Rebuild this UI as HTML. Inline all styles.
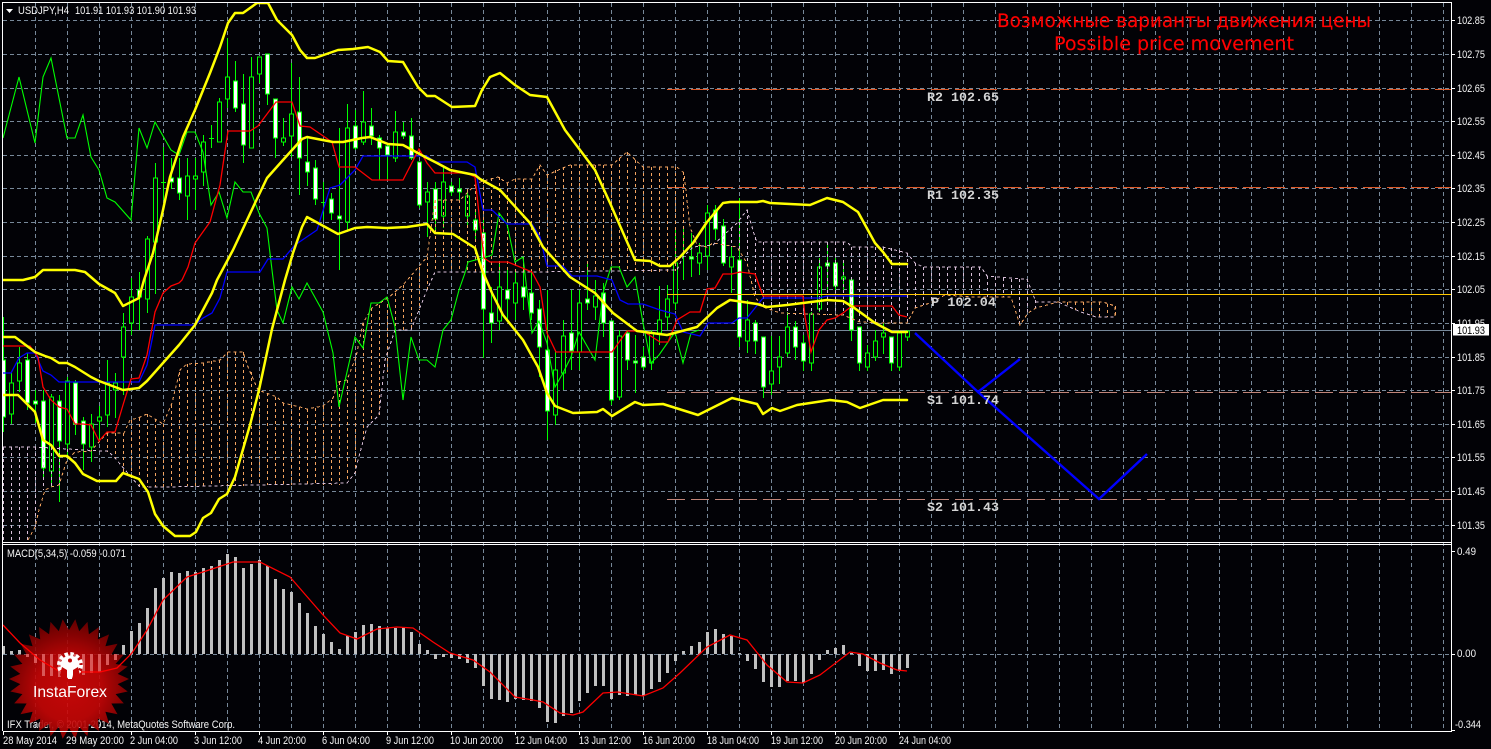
<!DOCTYPE html>
<html><head><meta charset="utf-8"><title>USDJPY,H4</title>
<style>
html,body{margin:0;padding:0;background:#020206;width:1491px;height:749px;overflow:hidden}
svg{display:block}
.t{font:11px "Liberation Sans",sans-serif;fill:#f6f6f6}
.p{font:bold 13px "Liberation Mono",monospace;fill:#d4d4d4}
.r{font:19px "DejaVu Sans",sans-serif;fill:#f00;stroke:#f00;stroke-width:.15px}
</style></head><body>
<svg xmlns="http://www.w3.org/2000/svg" width="1491" height="749" viewBox="0 0 1491 749">
<defs>
<clipPath id="c"><rect x="3" y="3" width="1448" height="539"/></clipPath>
<radialGradient id="g" cx=".5" cy=".58" r=".55"><stop offset="0" stop-color="#d80808"/><stop offset=".5" stop-color="#c80606"/><stop offset="1" stop-color="#760000"/></radialGradient>
</defs>
<rect width="1491" height="749" fill="#020206"/>
<!-- grid -->
<g fill="none" stroke="#778899" stroke-width="1" stroke-dasharray="4 3" shape-rendering="crispEdges">
<path d="M35.5 3V731M67.5 3V731M99.5 3V731M131.5 3V731M163.5 3V731M195.5 3V731M227.5 3V731M259.5 3V731M291.5 3V731M323.5 3V731M355.5 3V731M387.5 3V731M419.5 3V731M451.5 3V731M483.5 3V731M515.5 3V731M547.5 3V731M579.5 3V731M611.5 3V731M643.5 3V731M675.5 3V731M707.5 3V731M739.5 3V731M771.5 3V731M803.5 3V731M835.5 3V731M867.5 3V731M899.5 3V731M931.5 3V731M963.5 3V731M995.5 3V731M1027.5 3V731M1059.5 3V731M1091.5 3V731M1123.5 3V731M1155.5 3V731M1187.5 3V731M1219.5 3V731M1251.5 3V731M1283.5 3V731M1315.5 3V731M1347.5 3V731M1379.5 3V731M1411.5 3V731M1443.5 3V731"/>
<path d="M3 20.5H1451M3 54.5H1451M3 88.5H1451M3 121.5H1451M3 155.5H1451M3 188.5H1451M3 222.5H1451M3 256.5H1451M3 289.5H1451M3 323.5H1451M3 357.5H1451M3 390.5H1451M3 424.5H1451M3 457.5H1451M3 491.5H1451M3 525.5H1451M3 654.5H1451"/>
</g>
<!-- price and pivot lines -->
<g shape-rendering="crispEdges" fill="none">
<path d="M3 330.5H1451" stroke="#778899"/>
<path d="M667 89.5H1451M667 187.5H1451" stroke="#e05a28" stroke-dasharray="18 6"/>
<path d="M667 392.5H1451M667 499.5H1451" stroke="#c08478" stroke-dasharray="18 6"/>
</g>
<g clip-path="url(#c)">
<!-- wicks -->
<path shape-rendering="crispEdges" fill="none" stroke="#0f0" d="M3.5 317V432M11.5 373V424M19.5 347V392M27.5 353V410M35.5 390V423M43.5 390V480M51.5 394V487M59.5 395V502M67.5 377V457M75.5 380V435M83.5 417V470M91.5 414V462M99.5 406V440M107.5 360V427M115.5 373V418M123.5 313V395M131.5 278V335M139.5 272V330M147.5 236V313M155.5 163V294M163.5 147V200M171.5 158V189M179.5 158V200M187.5 158V220M195.5 158V210M203.5 135V186M211.5 125V148M219.5 98V142M227.5 38V108M235.5 61V112M243.5 74V163M251.5 57V148M259.5 57V83M267.5 54V105M275.5 99V158M283.5 118V146M291.5 63V157M299.5 77V195M307.5 138V186M315.5 160V205M323.5 182V220M331.5 193V220M339.5 128V270M347.5 104V232M355.5 110V150M363.5 91V145M371.5 108V145M379.5 135V180M387.5 146V180M395.5 111V162M403.5 122V139M411.5 118V160M419.5 162V208M427.5 182V237M435.5 182V230M443.5 167V228M451.5 182V196M459.5 178V200M467.5 190V228M475.5 210V240M483.5 220V358M491.5 287V343M499.5 263V330M507.5 270V320M515.5 272V320M523.5 257V310M531.5 272V320M539.5 300V377M547.5 290V440M555.5 350V425M563.5 320V390M571.5 290V370M579.5 290V370M587.5 262V310M595.5 280V320M603.5 283V337M611.5 321V405M619.5 330V400M627.5 330V370M635.5 335V393M643.5 347V370M651.5 330V370M659.5 286V345M667.5 285V330M675.5 230V310M683.5 227V280M691.5 233V277M699.5 243V275M707.5 205V270M715.5 205V240M723.5 219V266M731.5 247V293M739.5 198V347M747.5 300V353M755.5 320V354M763.5 337V398M771.5 336V395M779.5 336V384M787.5 312V357M795.5 321V360M803.5 335V371M811.5 312V371M819.5 258V312M827.5 243V290M835.5 258V290M843.5 263V290M851.5 280V341M859.5 327V371M867.5 345V371M875.5 330V361M883.5 323V354M891.5 337V371M899.5 330V371M907.5 330V341M161 182.5h5M209 138.5h5M321 202.5h5"/>
<!-- hollow bodies -->
<path shape-rendering="crispEdges" fill="#020206" stroke="#0f0" d="M9.5 383h4V414h-4zM17.5 363h4V381h-4zM49.5 397h4V471h-4zM65.5 381h4V444h-4zM89.5 424h4V447h-4zM97.5 417h4V421h-4zM105.5 383h4V415h-4zM113.5 383h4V390h-4zM121.5 327h4V357h-4zM129.5 297h4V323h-4zM145.5 239h4V299h-4zM153.5 178h4V242h-4zM185.5 176h4V196h-4zM193.5 176h4V179h-4zM201.5 142h4V172h-4zM217.5 102h4V142h-4zM225.5 77h4V99h-4zM249.5 77h4V148h-4zM257.5 57h4V74h-4zM281.5 138h4V142h-4zM289.5 114h4V136h-4zM345.5 128h4V222h-4zM361.5 122h4V142h-4zM393.5 132h4V158h-4zM425.5 192h4V202h-4zM441.5 182h4V216h-4zM465.5 196h4V216h-4zM497.5 287h4V321h-4zM513.5 283h4V303h-4zM553.5 370h4V415h-4zM561.5 336h4V373h-4zM577.5 303h4V352h-4zM593.5 296h4V307h-4zM617.5 336h4V397h-4zM649.5 333h4V363h-4zM657.5 320h4V333h-4zM665.5 299h4V317h-4zM673.5 263h4V303h-4zM697.5 253h4V263h-4zM705.5 213h4V256h-4zM729.5 257h4V267h-4zM745.5 320h4V341h-4zM769.5 371h4V384h-4zM777.5 357h4V367h-4zM785.5 327h4V353h-4zM809.5 314h4V363h-4zM817.5 267h4V309h-4zM841.5 277h4V279h-4zM865.5 353h4V367h-4zM873.5 341h4V357h-4zM881.5 333h4V337h-4zM897.5 333h4V367h-4zM905.5 331h4V337h-4z"/>
<!-- white bodies -->
<path shape-rendering="crispEdges" fill="#fff" stroke="#0f0" d="M1.5 360h4V417h-4zM25.5 360h4V403h-4zM33.5 401h4V404h-4zM41.5 401h4V468h-4zM57.5 401h4V441h-4zM73.5 383h4V424h-4zM81.5 421h4V444h-4zM137.5 290h4V297h-4zM169.5 178h4V182h-4zM177.5 178h4V193h-4zM233.5 81h4V108h-4zM241.5 104h4V145h-4zM265.5 54h4V94h-4zM273.5 99h4V138h-4zM297.5 112h4V158h-4zM305.5 162h4V172h-4zM313.5 168h4V199h-4zM329.5 199h4V213h-4zM337.5 216h4V219h-4zM353.5 126h4V148h-4zM369.5 126h4V136h-4zM377.5 138h4V148h-4zM385.5 146h4V155h-4zM401.5 132h4V136h-4zM409.5 136h4V158h-4zM417.5 162h4V205h-4zM433.5 189h4V219h-4zM449.5 186h4V192h-4zM457.5 189h4V192h-4zM473.5 220h4V230h-4zM481.5 233h4V309h-4zM489.5 313h4V323h-4zM505.5 290h4V299h-4zM521.5 287h4V297h-4zM529.5 293h4V313h-4zM537.5 309h4V347h-4zM545.5 350h4V411h-4zM569.5 333h4V351h-4zM585.5 299h4V303h-4zM601.5 293h4V323h-4zM609.5 321h4V400h-4zM625.5 333h4V360h-4zM633.5 361h4V363h-4zM641.5 357h4V367h-4zM689.5 257h4V259h-4zM713.5 210h4V229h-4zM721.5 226h4V263h-4zM737.5 260h4V337h-4zM753.5 323h4V341h-4zM761.5 337h4V387h-4zM793.5 327h4V347h-4zM801.5 343h4V361h-4zM825.5 263h4V266h-4zM833.5 263h4V286h-4zM849.5 280h4V330h-4zM857.5 327h4V363h-4zM889.5 337h4V363h-4z"/>
<!-- cloud -->
<g fill="none" stroke-dasharray="3 3" shape-rendering="crispEdges">
<path stroke="#f4a460" d="M107.5 433V452M115.5 433V458M123.5 433V473M131.5 420V477M139.5 418V487M147.5 414V487M155.5 419V487M163.5 424V487M171.5 405V486M179.5 372V486M187.5 364V486M195.5 363V486M203.5 363V486M211.5 361V486M219.5 360V486M227.5 352V486M235.5 352V486M243.5 352V486M251.5 372V486M259.5 390V486M267.5 393V485M275.5 397V485M283.5 403V485M291.5 405V485M299.5 407V485M307.5 409V485M315.5 408V485M323.5 406V485M331.5 400V485M339.5 382V485M347.5 380V483M355.5 357V473M363.5 323V441M371.5 308V423M379.5 305V415M387.5 298V372M395.5 293V330M403.5 285V330M411.5 277V330M419.5 267V310M427.5 257V290M435.5 200V272M443.5 200V272M451.5 200V272M459.5 200V272M467.5 189V272M475.5 185V272M483.5 181V272M491.5 178V272M499.5 177V272M507.5 183V272M515.5 179V272M523.5 179V272M531.5 179V272M539.5 166V272M547.5 175V272M555.5 170V272M563.5 167V272M571.5 165V272M579.5 165V272M587.5 165V272M595.5 165V272M603.5 165V272M611.5 165V272M619.5 158V272M627.5 152V272M635.5 160V272M643.5 167V272M651.5 167V272M659.5 167V272M667.5 167V272M675.5 167V271M683.5 172V257M1067.5 302V307M1075.5 302V310M1083.5 302V312M1091.5 302V315M1099.5 302V317M1107.5 304V317M1115.5 306V317"/>
<path stroke="#d8bfd8" d="M3.5 447V540M11.5 447V540M19.5 447V540M27.5 447V540M35.5 447V527M43.5 447V490M51.5 447V487M59.5 447V485M67.5 449V460M723.5 233V246M731.5 228V247M739.5 222V250M747.5 210V263M755.5 237V297M763.5 242V307M771.5 242V310M779.5 242V313M787.5 242V315M795.5 242V315M803.5 242V315M811.5 242V315M819.5 242V315M827.5 242V315M835.5 242V315M843.5 242V315M851.5 247V319M859.5 247V322M867.5 247V323M875.5 247V323M883.5 247V323M891.5 248V323M899.5 250V323M907.5 253V323M915.5 263V308M923.5 267V305M931.5 267V303M939.5 267V297M947.5 267V295M955.5 267V296M963.5 267V297M971.5 267V297M979.5 267V297M987.5 276V297M995.5 277V297M1003.5 278V297M1011.5 279V297M1019.5 279V325M1027.5 279V313M1035.5 300V308"/>
<polyline stroke="#f4a460" points="28,540 35,527 39,510 45,490 51,487 59,485 67,460 75,452 91,451 107,433 124,433 130,420 138,418 147,414 163,424 172,403 180,370 187,364 203,363 220,360 228,352 243,352 248,367 258,390 277,397 283,403 300,407 307,409 323,406 333,398 338,382 347,380 356,357 363,323 372,308 388,298 403,285 410,277 427,257 435,200 460,200 475,185 480,182 498,177 507,183 515,179 532,179 540,165 547,175 570,165 612,165 627,152 643,167 677,167 684,173 690,227 697,245 707,247 713,243 737,247 747,263 755,297 763,307 780,313 843,315 860,322 883,323 907,323 915,308 930,303 945,295 972,297 1011,297 1020,325 1028,313 1036,308 1058,302 1103,302 1115,306 1115,317"/>
<polyline stroke="#d8bfd8" points="3,447 35,447 100,451 108,451 115,458 131,477 140,487 165,487 347,483 355,473 358,460 367,427 379,415 385,360 395,330 411,330 427,290 435,272 533,272 677,270 683,257 693,247 713,245 737,223 747,210 755,237 757,242 847,242 852,247 883,247 907,253 915,263 923,267 981,267 987,276 1021,279 1027,279 1032,292 1036,302 1058,302 1081,312 1096,317 1115,317"/>
</g>
<!-- chikou -->
<polyline fill="none" stroke="#0f0" stroke-width="1.1" points="3,138 19,77 35,143 43,77 51,58 67,138 75,138 83,115 91,157 99,170 107,198 115,202 131,220 139,128 147,148 155,122 171,150 179,155 187,132 195,132 203,152 211,205 219,192 227,218 235,182 243,192 251,192 259,213 267,228 272,270 277,310 283,323 292,287 299,299 307,283 323,312 333,353 339,407 355,337 363,348 371,303 379,303 387,297 395,327 403,400 411,337 419,360 427,360 435,367 443,330 451,320 459,290 466,270 468,262 483,258 492,255 499,213 507,224 515,262 523,257 532,333 539,321 547,343 555,387 563,373 571,357 579,332 595,360 603,293 611,267 619,267 627,287 635,277 643,323 651,363 659,355 675,332 683,363 691,333 699,330"/>
<!-- kijun -->
<polyline fill="none" stroke="#0000ff" stroke-width="1.3" points="3,373 11,373 19,358 27,353 35,353 43,371 51,375 59,382 139,382 147,365 155,325 195,325 203,318 212,313 220,298 227,272 260,272 268,259 283,259 295,245 317,230 330,188 340,185 355,170 363,156 427,156 435,162 467,162 475,167 483,210 492,210 507,224 532,224 540,237 547,266 563,266 572,276 597,276 612,280 620,300 628,304 643,304 660,310 675,314 683,332 700,336 708,323 732,323 739,318 747,318 763,298 819,298 827,296 907,296"/>
<!-- tenkan -->
<polyline fill="none" stroke="#f00" stroke-width="1.3" points="3,346 30,346 38,357 43,387 51,400 59,407 67,409 75,424 83,424 91,425 99,441 107,432 115,432 123,405 131,379 139,378 147,355 155,312 163,293 171,286 179,283 182,280 188,267 195,243 210,222 220,185 228,131 250,131 258,126 276,102 292,102 300,126 310,127 332,142 339,167 355,167 372,180 403,180 419,149 427,163 435,173 467,173 475,177 480,223 484,258 490,262 508,262 532,272 540,287 547,333 556,352 612,352 627,331 643,331 660,342 668,342 677,320 690,312 700,312 707,289 715,288 723,274 732,274 740,272 755,274 763,296 803,296 805,317 811,352 819,330 827,320 835,318 843,313 852,306 892,306 899,315 907,317"/>
<!-- bollinger -->
<g fill="none" stroke="#ff0" stroke-width="2.5" stroke-linejoin="round" stroke-linecap="round">
<polyline points="3,280 23,280 35,277 43,270 75,270 85,272 99,284 115,293 123,306 139,298 144,280 153,253 163,210 170,177 183,137 195,110 210,73 220,47 228,23 235,13 243,13 257,3 268,3 277,20 292,35 300,50 307,58 315,58 338,50 353,49 368,47 380,52 388,61 403,62 418,87 427,96 435,96 452,107 475,106 482,90 490,77 500,73 515,85 530,95 547,97 565,130 595,170 610,203 635,260 650,261 660,266 670,266 680,257 693,243 707,222 723,203 730,202 757,202 763,201 770,203 810,205 827,198 843,202 858,212 875,243 883,252 892,264 907,264"/>
<polyline points="3,337 15,337 35,352 45,356 51,358 59,363 67,363 75,367 91,377 99,381 123,390 139,388 147,381 163,363 179,345 195,325 212,293 217,280 233,250 255,203 267,178 283,160 302,139 307,137 333,142 343,142 362,138 370,137 388,144 403,145 427,158 437,163 450,170 475,175 480,179 500,190 530,223 543,247 570,277 595,293 613,313 637,331 667,335 697,327 717,308 730,300 757,304 767,307 787,305 827,300 843,301 853,307 875,323 892,332 907,332"/>
<polyline points="3,395 18,395 35,412 43,440 51,445 59,456 67,456 75,463 83,474 97,481 116,481 123,473 139,479 148,492 155,514 163,526 175,536 190,536 196,532 203,518 211,513 219,499 227,494 235,477 250,425 259,390 272,329 285,280 293,253 302,227 307,217 338,234 355,228 367,227 387,228 407,227 427,224 435,233 453,234 475,248 482,270 492,293 503,315 523,340 538,367 547,393 555,406 573,413 597,412 603,409 612,416 635,402 643,405 663,404 698,415 732,398 757,404 763,414 772,408 780,411 797,405 830,400 847,402 860,408 883,400 907,400"/>
</g>
<!-- forecast -->
<g fill="none" stroke="#0000ff" stroke-width="2.4">
<polyline points="915,333 978,392 1020,359"/>
<polyline points="978,392 1099,499 1147,454"/>
</g>
<path d="M667 294.5H1451" stroke="#ffc800" shape-rendering="crispEdges"/>
<!-- pivot labels -->
<text class="p" x="927" y="101" textLength="72" lengthAdjust="spacingAndGlyphs">R2 102.65</text>
<text class="p" x="927" y="199" textLength="72" lengthAdjust="spacingAndGlyphs">R1 102.35</text>
<text class="p" x="931" y="306" textLength="65" lengthAdjust="spacingAndGlyphs">P 102.04</text>
<text class="p" x="927" y="404" textLength="72" lengthAdjust="spacingAndGlyphs">S1 101.74</text>
<text class="p" x="927" y="511" textLength="72" lengthAdjust="spacingAndGlyphs">S2 101.43</text>
<text class="r" x="997" y="27" textLength="374" lengthAdjust="spacingAndGlyphs">Возможные варианты движения цены</text>
<text class="r" x="1054" y="50" textLength="240" lengthAdjust="spacingAndGlyphs">Possible price movement</text>
</g>
<!-- top labels -->
<path d="M6 9h7l-3.5 4z" fill="#fff"/>
<text class="t" x="18" y="14" textLength="51" lengthAdjust="spacingAndGlyphs">USDJPY,H4</text>
<text class="t" x="75" y="14" textLength="121" lengthAdjust="spacingAndGlyphs">101.91 101.93 101.90 101.93</text>
<!-- MACD -->
<path fill="none" stroke="#c0c0c0" stroke-width="3" shape-rendering="crispEdges" d="M3.5 654V646M11.5 654V651M19.5 654V650M27.5 654V657M35.5 654V663M43.5 654V676M51.5 654V676M59.5 654V677M67.5 654V678M75.5 654V678M83.5 654V675M91.5 654V673M99.5 654V672M107.5 654V665M115.5 654V660M123.5 654V645M131.5 654V631M139.5 654V623M147.5 654V608M155.5 654V588M163.5 654V578M171.5 654V572M179.5 654V573M187.5 654V571M195.5 654V572M203.5 654V568M211.5 654V566M219.5 654V560M227.5 654V554M235.5 654V557M243.5 654V568M251.5 654V564M259.5 654V560M267.5 654V566M275.5 654V579M283.5 654V589M291.5 654V592M299.5 654V603M307.5 654V613M315.5 654V626M323.5 654V634M331.5 654V642M339.5 654V649M347.5 654V636M355.5 654V632M363.5 654V625M371.5 654V624M379.5 654V626M387.5 654V628M395.5 654V628M403.5 654V628M411.5 654V632M419.5 654V644M427.5 654V650M435.5 654V659M443.5 654V657M451.5 654V658M459.5 654V659M467.5 654V663M475.5 654V668M483.5 654V686M491.5 654V699M499.5 654V700M507.5 654V702M515.5 654V699M523.5 654V700M531.5 654V701M539.5 654V708M547.5 654V722M555.5 654V723M563.5 654V716M571.5 654V713M579.5 654V701M587.5 654V693M595.5 654V686M603.5 654V686M611.5 654V699M619.5 654V695M627.5 654V696M635.5 654V695M643.5 654V696M651.5 654V689M659.5 654V682M667.5 654V673M675.5 654V661M683.5 654V651M691.5 654V646M699.5 654V642M707.5 654V632M715.5 654V629M723.5 654V634M731.5 654V636M739.5 654V653M747.5 654V661M755.5 654V669M763.5 654V682M771.5 654V687M779.5 654V687M787.5 654V681M795.5 654V681M803.5 654V683M811.5 654V674M819.5 654V660M827.5 654V650M835.5 654V648M843.5 654V645M851.5 654V653M859.5 654V666M867.5 654V671M875.5 654V671M883.5 654V670M891.5 654V674M899.5 654V671M907.5 654V668"/>
<text class="t" x="7" y="557" textLength="119" lengthAdjust="spacingAndGlyphs">MACD(5,34,5) -0.059 -0.071</text>
<text class="t" x="7" y="728" textLength="228" lengthAdjust="spacingAndGlyphs">IFX Trader, © 2001-2014, MetaQuotes Software Corp.</text>
<!-- logo -->
<polygon transform="translate(69 679)" fill="url(#g)" opacity=".9" points="60,0 48.7,5.1 58.7,12.5 46.6,15.1 54.8,24.4 42.4,24.5 48.5,35.3 36.4,32.8 40.1,44.6 28.8,39.6 30,52 19.9,44.8 18.5,57.1 10.2,47.9 6.3,59.7 0,49 -6.3,59.7 -10.2,47.9 -18.5,57.1 -19.9,44.8 -30,52 -28.8,39.6 -40.1,44.6 -36.4,32.8 -48.5,35.3 -42.4,24.5 -54.8,24.4 -46.6,15.1 -58.7,12.5 -48.7,5.1 -60,0 -48.7,-5.1 -58.7,-12.5 -46.6,-15.1 -54.8,-24.4 -42.4,-24.5 -48.5,-35.3 -36.4,-32.8 -40.1,-44.6 -28.8,-39.6 -30,-52 -19.9,-44.8 -18.5,-57.1 -10.2,-47.9 -6.3,-59.7 0,-49 6.3,-59.7 10.2,-47.9 18.5,-57.1 19.9,-44.8 30,-52 28.8,-39.6 40.1,-44.6 36.4,-32.8 48.5,-35.3 42.4,-24.5 54.8,-24.4 46.6,-15.1 58.7,-12.5 48.7,-5.1"/>
<path fill="none" stroke="#d85858" stroke-width="3" shape-rendering="crispEdges" d="M27.5 654V657M35.5 654V663M43.5 654V676M51.5 654V676M59.5 654V677M67.5 654V678M75.5 654V678M83.5 654V675M91.5 654V673M99.5 654V672M107.5 654V665M115.5 654V660"/>
<!-- signal -->
<polyline fill="none" stroke="#f00" stroke-width="1.3" points="3,625 20,643 40,660 57,670 80,672 100,672 117,668 132,653 147,630 163,600 187,577 203,572 233,562 260,562 290,577 323,615 340,633 357,639 377,629 397,627 413,628 433,642 450,653 473,660 490,672 515,697 533,700 543,702 560,713 573,715 583,712 603,693 618,692 643,696 663,688 680,673 707,647 730,635 747,640 767,665 787,682 803,683 820,675 850,652 863,654 880,663 897,670 907,671"/>
<!-- gear -->
<circle cx="70" cy="665" r="9.5" fill="#fff"/>
<circle cx="70" cy="665" r="11" fill="none" stroke="#fff" stroke-width="4" stroke-dasharray="3.4 2.36"/>
<path d="M62 667L67 670V680H62.5L60 675zM78 667L73 670V680H77.5L80 675z" fill="#c20606"/>
<circle cx="70" cy="660.5" r="2" fill="#c20606"/>
<rect x="68" y="668" width="4" height="11" fill="#fff"/>
<text x="33" y="697" font-family="'Liberation Sans',sans-serif" font-size="16" fill="#fff" textLength="74" lengthAdjust="spacingAndGlyphs">InstaForex</text>
<!-- frame -->
<g fill="none" stroke="#fff" shape-rendering="crispEdges">
<path d="M2.5 731V2.5H1451.5V731.5H3M3 542.5H1451M3 544.5H1451"/>
<path d="M1452 20.5h3M1452 54.5h3M1452 88.5h3M1452 121.5h3M1452 155.5h3M1452 188.5h3M1452 222.5h3M1452 256.5h3M1452 289.5h3M1452 323.5h3M1452 357.5h3M1452 390.5h3M1452 424.5h3M1452 457.5h3M1452 491.5h3M1452 525.5h3M1452 551.5h3M1452 654.5h3M1452 730.5h3"/>
<path d="M3.5 732v3M131.5 732v3M195.5 732v3M259.5 732v3M323.5 732v3M387.5 732v3M451.5 732v3M515.5 732v3M579.5 732v3M643.5 732v3M707.5 732v3M771.5 732v3M835.5 732v3M899.5 732v3"/>
</g>
<!-- right axis -->
<g class="t">
<text class="t" x="1457" y="24" textLength="28" lengthAdjust="spacingAndGlyphs">102.85</text>
<text class="t" x="1457" y="58" textLength="28" lengthAdjust="spacingAndGlyphs">102.75</text>
<text class="t" x="1457" y="92" textLength="28" lengthAdjust="spacingAndGlyphs">102.65</text>
<text class="t" x="1457" y="125" textLength="28" lengthAdjust="spacingAndGlyphs">102.55</text>
<text class="t" x="1457" y="159" textLength="28" lengthAdjust="spacingAndGlyphs">102.45</text>
<text class="t" x="1457" y="192" textLength="28" lengthAdjust="spacingAndGlyphs">102.35</text>
<text class="t" x="1457" y="226" textLength="28" lengthAdjust="spacingAndGlyphs">102.25</text>
<text class="t" x="1457" y="260" textLength="28" lengthAdjust="spacingAndGlyphs">102.15</text>
<text class="t" x="1457" y="293" textLength="28" lengthAdjust="spacingAndGlyphs">102.05</text>
<text class="t" x="1457" y="327" textLength="28" lengthAdjust="spacingAndGlyphs">101.95</text>
<text class="t" x="1457" y="361" textLength="28" lengthAdjust="spacingAndGlyphs">101.85</text>
<text class="t" x="1457" y="394" textLength="28" lengthAdjust="spacingAndGlyphs">101.75</text>
<text class="t" x="1457" y="428" textLength="28" lengthAdjust="spacingAndGlyphs">101.65</text>
<text class="t" x="1457" y="461" textLength="28" lengthAdjust="spacingAndGlyphs">101.55</text>
<text class="t" x="1457" y="495" textLength="28" lengthAdjust="spacingAndGlyphs">101.45</text>
<text class="t" x="1457" y="529" textLength="28" lengthAdjust="spacingAndGlyphs">101.35</text>
<text class="t" x="1457" y="555" textLength="19" lengthAdjust="spacingAndGlyphs">0.49</text>
<text class="t" x="1457" y="657" textLength="19" lengthAdjust="spacingAndGlyphs">0.00</text>
<text class="t" x="1455" y="728" textLength="26" lengthAdjust="spacingAndGlyphs">-0.344</text>
</g>
<rect x="1453" y="324" width="36" height="11.5" fill="#fff"/>
<text x="1457" y="334" font-family="'Liberation Sans',sans-serif" font-size="11" fill="#000" textLength="28" lengthAdjust="spacingAndGlyphs">101.93</text>
<!-- dates -->
<text class="t" x="3" y="744" textLength="54" lengthAdjust="spacingAndGlyphs">28 May 2014</text>
<text class="t" x="66" y="744" textLength="58" lengthAdjust="spacingAndGlyphs">29 May 20:00</text>
<text class="t" x="130" y="744" textLength="48" lengthAdjust="spacingAndGlyphs">2 Jun 04:00</text>
<text class="t" x="194" y="744" textLength="48" lengthAdjust="spacingAndGlyphs">3 Jun 12:00</text>
<text class="t" x="258" y="744" textLength="48" lengthAdjust="spacingAndGlyphs">4 Jun 20:00</text>
<text class="t" x="322" y="744" textLength="48" lengthAdjust="spacingAndGlyphs">6 Jun 04:00</text>
<text class="t" x="386" y="744" textLength="48" lengthAdjust="spacingAndGlyphs">9 Jun 12:00</text>
<text class="t" x="450" y="744" textLength="53" lengthAdjust="spacingAndGlyphs">10 Jun 20:00</text>
<text class="t" x="515" y="744" textLength="52" lengthAdjust="spacingAndGlyphs">12 Jun 04:00</text>
<text class="t" x="579" y="744" textLength="52" lengthAdjust="spacingAndGlyphs">13 Jun 12:00</text>
<text class="t" x="643" y="744" textLength="52" lengthAdjust="spacingAndGlyphs">16 Jun 20:00</text>
<text class="t" x="707" y="744" textLength="52" lengthAdjust="spacingAndGlyphs">18 Jun 04:00</text>
<text class="t" x="771" y="744" textLength="52" lengthAdjust="spacingAndGlyphs">19 Jun 12:00</text>
<text class="t" x="835" y="744" textLength="52" lengthAdjust="spacingAndGlyphs">20 Jun 20:00</text>
<text class="t" x="899" y="744" textLength="52" lengthAdjust="spacingAndGlyphs">24 Jun 04:00</text>
</svg>
</body></html>
